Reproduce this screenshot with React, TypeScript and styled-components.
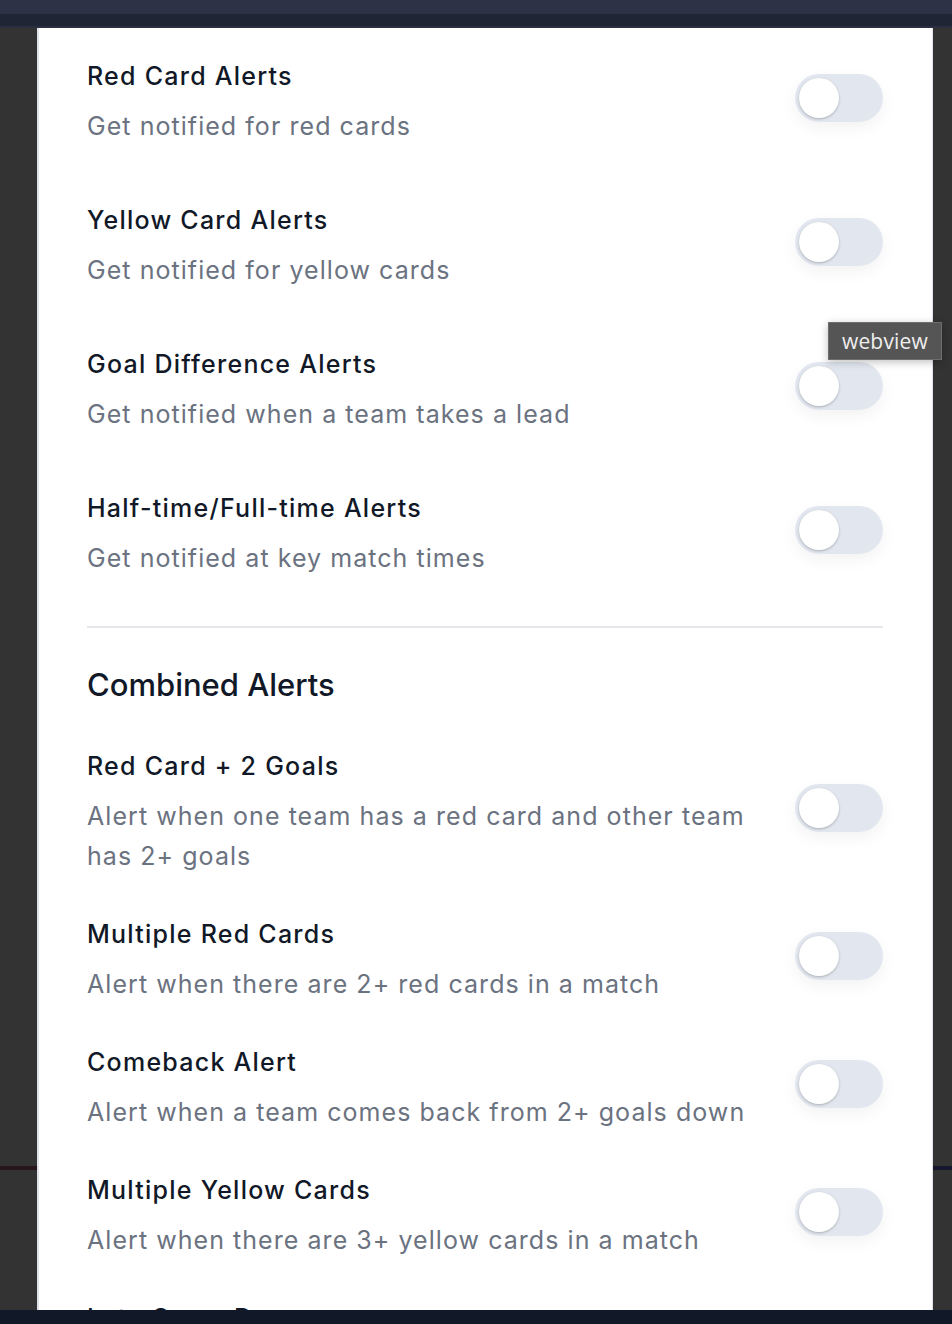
import React from "react";
import styled, { createGlobalStyle } from "styled-components";

const Global = createGlobalStyle`
  html, body { margin: 0; padding: 0; background: #333333; }
  body { font-family: Inter, "Noto Sans", "Liberation Sans", sans-serif; -webkit-font-smoothing: antialiased; }
  * { box-sizing: border-box; }
`;

const Page = styled.div`
  position: relative;
  width: 952px;
  height: 1324px;
  display: flex;
  flex-direction: column;
  overflow: hidden;
  background: #333333;
`;

const TopBar = styled.div`
  flex: 0 0 auto;
  display: flex;
  flex-direction: column;
`;

const TopStrip = styled.div<{ $h: number; $c: string }>`
  height: ${(p) => p.$h}px;
  background: ${(p) => p.$c};
`;

const Middle = styled.div`
  flex: 1 1 auto;
  min-height: 0;
  display: flex;
  overflow: hidden;
`;

const Gutter = styled.div<{ $w: number; $stripe: string }>`
  flex: 0 0 ${(p) => p.$w}px;
  background: linear-gradient(
    to bottom,
    #333333 0px,
    #333333 1138px,
    ${(p) => p.$stripe} 1138px,
    ${(p) => p.$stripe} 1142px,
    #333333 1142px
  );
`;

const Panel = styled.div`
  flex: 0 0 896px;
  background: #ffffff;
  border-left: 2px solid #dfe2ea;
  border-right: 1px solid #dfe2ea;
  padding: 32px 49px 0 48px;
  display: flex;
  flex-direction: column;
`;

const BottomBar = styled.div`
  flex: 0 0 14px;
  background: #111827;
`;

const Section = styled.div<{ $gap: number }>`
  display: flex;
  flex-direction: column;
  gap: ${(p) => p.$gap}px;
`;

const Row = styled.div`
  display: flex;
  align-items: center;
  gap: 40px;
`;

const TextCol = styled.div`
  flex: 1 1 auto;
  min-width: 0;
  display: flex;
  flex-direction: column;
`;

const Title = styled.div`
  font-size: 25px;
  line-height: 32px;
  font-weight: 500;
  letter-spacing: 1.25px;
  color: #111827;
  margin-bottom: 14px;
`;

const Desc = styled.div`
  font-size: 25px;
  line-height: 40px;
  font-weight: 400;
  letter-spacing: 1.05px;
  color: #6b7280;
`;

const Track = styled.div`
  flex: 0 0 88px;
  width: 88px;
  height: 48px;
  border-radius: 24px;
  background: #e2e7ef;
  margin-bottom: 10px;
  padding: 4px;
  display: flex;
  align-items: center;
  box-shadow: 0 6px 16px rgba(0, 0, 0, 0.05);
`;

const Knob = styled.div`
  width: 40px;
  height: 40px;
  border-radius: 50%;
  background: #ffffff;
  box-shadow: 0 1px 3px rgba(0, 0, 0, 0.18), 0 1px 2px rgba(0, 0, 0, 0.08);
`;

const Divider = styled.div`
  flex: 0 0 2px;
  height: 2px;
  background: #e5e7eb;
  margin: 48px 0 39px 0;
`;

const SectionHeading = styled.h2`
  margin: 0 0 47px 0;
  font-size: 31px;
  line-height: 36px;
  font-weight: 500;
  color: #111827;
`;

const Tooltip = styled.div`
  position: absolute;
  left: 828px;
  top: 322px;
  width: 114px;
  height: 38px;
  background: #555555;
  border: 1px solid #6e6e6e;
  box-shadow: 0 2px 8px rgba(0, 0, 0, 0.25);
  color: #eeeeee;
  font-family: "Open Sans", Inter, "Liberation Sans", sans-serif;
  font-size: 21px;
  display: flex;
  align-items: center;
  justify-content: center;
  letter-spacing: 0.2px;
`;

type Item = { title: string; desc: string };

const basic: Item[] = [
  { title: "Red Card Alerts", desc: "Get notified for red cards" },
  { title: "Yellow Card Alerts", desc: "Get notified for yellow cards" },
  { title: "Goal Difference Alerts", desc: "Get notified when a team takes a lead" },
  { title: "Half-time/Full-time Alerts", desc: "Get notified at key match times" },
];

const combined: Item[] = [
  { title: "Red Card + 2 Goals", desc: "Alert when one team has a red card and other team has 2+ goals" },
  { title: "Multiple Red Cards", desc: "Alert when there are 2+ red cards in a match" },
  { title: "Comeback Alert", desc: "Alert when a team comes back from 2+ goals down" },
  { title: "Multiple Yellow Cards", desc: "Alert when there are 3+ yellow cards in a match" },
  { title: "Late Game Drama", desc: "Alert when a goal is scored after the 85th minute" },
];

const Toggle = () => (
  <Track role="switch" aria-checked="false">
    <Knob />
  </Track>
);

const SettingRow = ({ item }: { item: Item }) => (
  <Row>
    <TextCol>
      <Title>{item.title}</Title>
      <Desc>{item.desc}</Desc>
    </TextCol>
    <Toggle />
  </Row>
);

export default function App() {
  return (
    <>
      <Global />
      <Page>
        <TopBar>
          <TopStrip $h={14} $c="#2d3247" />
          <TopStrip $h={12} $c="#1f2535" />
          <TopStrip $h={2} $c="#2a3040" />
        </TopBar>
        <Middle>
          <Gutter $w={37} $stripe="#26151d" />
          <Panel>
            <Section $gap={58}>
              {basic.map((it) => (
                <SettingRow key={it.title} item={it} />
              ))}
            </Section>
            <Divider />
            <SectionHeading>Combined Alerts</SectionHeading>
            <Section $gap={42}>
              {combined.map((it) => (
                <SettingRow key={it.title} item={it} />
              ))}
            </Section>
          </Panel>
          <Gutter $w={19} $stripe="#16162e" />
        </Middle>
        <BottomBar />
        <Tooltip>webview</Tooltip>
      </Page>
    </>
  );
}
